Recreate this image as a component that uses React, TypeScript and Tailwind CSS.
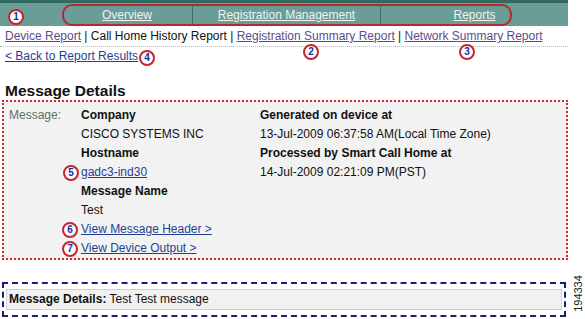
const callout = (n: number, pos: string) => (
  <span
    className={`absolute ${pos} flex h-[16px] w-[16px] items-center justify-center rounded-full border-2 border-[#c4262e] bg-white text-[10px] font-bold leading-none text-[#1b2a9c]`}
  >
    {n}
  </span>
);

const leftRows = [
  { text: "Company", kind: "label" },
  { text: "CISCO SYSTEMS INC", kind: "value" },
  { text: "Hostname", kind: "label" },
  { text: "gadc3-ind30", kind: "link" },
  { text: "Message Name", kind: "label" },
  { text: "Test", kind: "value" },
  { text: "View Message Header >", kind: "link" },
  { text: "View Device Output >", kind: "link" },
];

const rightRows = [
  { text: "Generated on device at", kind: "label" },
  { text: "13-Jul-2009 06:37:58 AM(Local Time Zone)", kind: "value" },
  { text: "Processed by Smart Call Home at", kind: "label" },
  { text: "14-Jul-2009 02:21:09 PM(PST)", kind: "value" },
];

function Row({ text, kind }: { text: string; kind: string }) {
  if (kind === "label") return <div className="h-[19px] font-bold leading-[19px]">{text}</div>;
  if (kind === "link")
    return <div className="h-[19px] leading-[19px] text-[#1f3f95] underline">{text}</div>;
  return <div className="h-[19px] leading-[19px]">{text}</div>;
}

export default function App() {
  return (
    <div className="relative h-[319px] w-[585px] overflow-hidden bg-white text-[12px] text-[#111] [font-family:'Liberation_Sans',Arial,sans-serif]">
      {/* top navigation */}
      <div className="relative w-[568px] border-t-[3px] border-[#2f6b60] bg-[#6a9d96]">
        <div className="flex h-[23px] items-center">
          <div className="w-[62px]" />
          <div className="flex w-[131px] justify-center border-r border-[#3d6f66] text-[#eef4f2] underline">Overview</div>
          <div className="flex w-[188px] justify-center border-r border-[#3d6f66] text-[#eef4f2] underline">
            Registration Management
          </div>
          <div className="flex flex-1 justify-center text-[#eef4f2] underline">Reports</div>
        </div>
        <div className="absolute left-[62px] top-[1px] h-[22px] w-[450px] rounded-[10px] border-2 border-[#b7282f]" />
        {callout(1, "left-[8px] top-[6px]")}
      </div>

      {/* sub navigation */}
      <div className="w-[568px] border-b border-dotted border-[#b8b8b8] px-[5px] pb-[2px] pt-[2px] leading-[16px]">
        <span className="text-[#5c4c8f] underline">Device Report</span> | Call Home History Report |{" "}
        <span className="text-[#5c4c8f] underline">Registration Summary Report</span> |{" "}
        <span className="text-[#5c4c8f] underline">Network Summary Report</span>
      </div>
      {callout(2, "left-[303px] top-[44px]")}
      {callout(3, "left-[459px] top-[44px]")}

      <div className="relative px-[5px] pt-[1px] leading-[16px]">
        <span className="text-[#1f3f95] underline">&lt; Back to Report Results</span>
        {callout(4, "left-[139px] top-[3px]")}
      </div>

      {/* message details */}
      <h2 className="mt-[18px] px-[5px] text-[15.5px] font-bold leading-[18px]">Message Details</h2>
      <div className="ml-[2px] w-[566px] border-2 border-dotted border-[#cf2a33] bg-[#f2f2f2] pt-[4px]">
        <div className="flex">
          <div className="w-[77px] pl-[5px] leading-[19px] text-[#5f6f6c]">Message:</div>
          <div className="relative w-[179px]">
            {leftRows.map((r) => (
              <Row key={r.text} {...r} />
            ))}
            {callout(5, "left-[-18px] top-[59px]")}
            {callout(6, "left-[-19px] top-[116px]")}
            {callout(7, "left-[-19px] top-[135px]")}
          </div>
          <div>
            {rightRows.map((r) => (
              <Row key={r.text} {...r} />
            ))}
          </div>
        </div>
      </div>

      {/* bottom summary */}
      <div className="flex items-start">
        <div className="ml-[2px] mt-[22px] w-[564px] border-2 border-dashed border-[#1e1e78] px-[2px] py-[5px]">
          <div className="h-[21px] border border-[#cfcfcf] bg-[#f1f1f1] px-[2px] leading-[19px]">
            <span className="font-bold">Message Details:</span> Test Test message
          </div>
        </div>
        <div className="ml-[5px] mt-[13px] flex h-[40px] w-[14px] items-center justify-center">
          <span className="-rotate-90 whitespace-nowrap text-[11px] leading-none text-[#222]">194334</span>
        </div>
      </div>
    </div>
  );
}
